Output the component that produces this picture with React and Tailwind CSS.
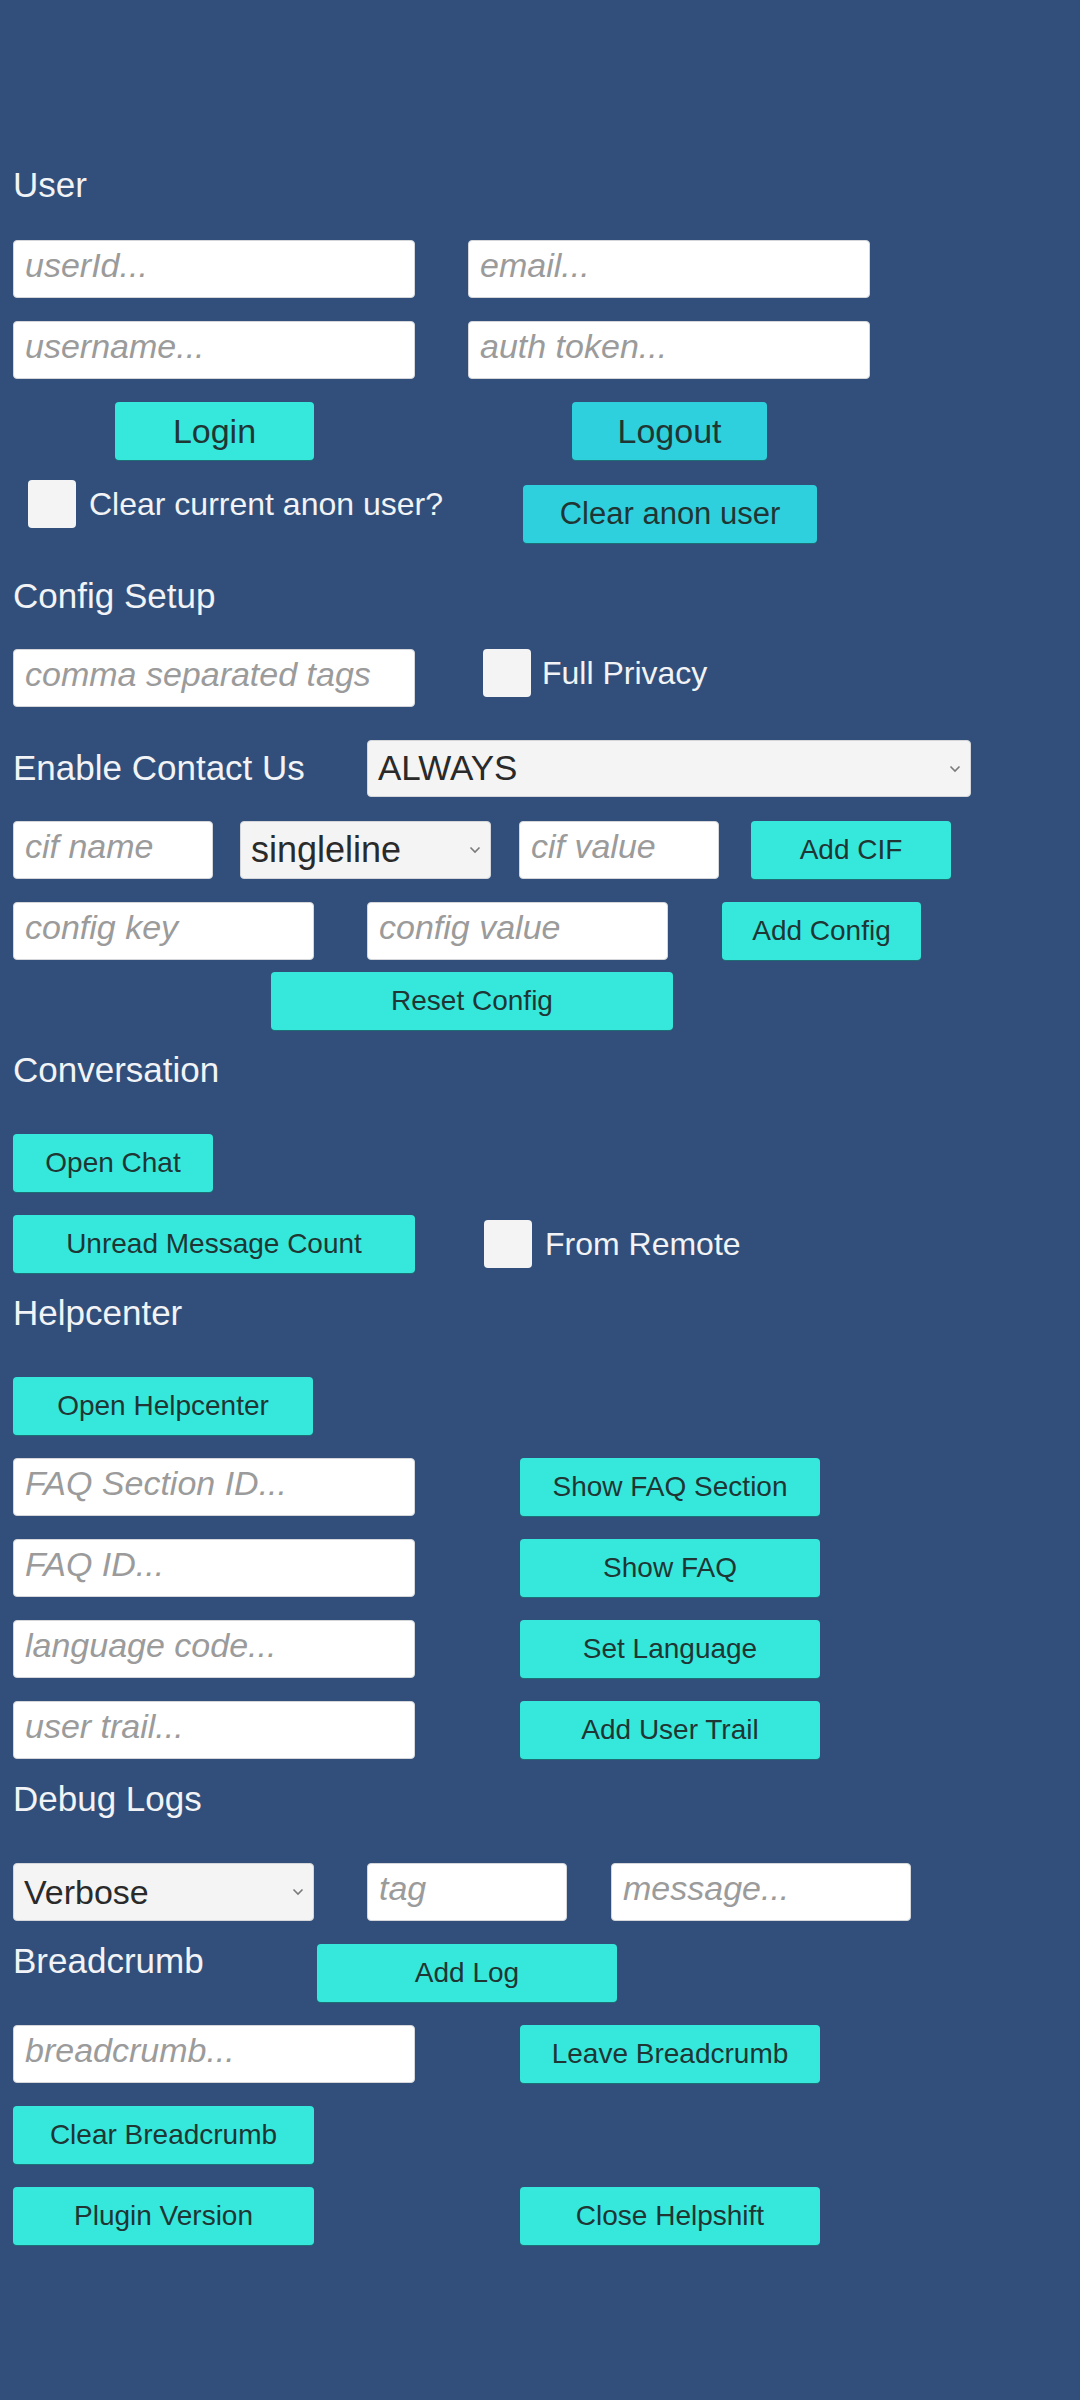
// Helpshift plugin test screen (Unity-style debug panel)

function Heading({ children, className = '' }) {
  return (
    <div className={`h-[40px] leading-[34px] text-[35px] text-[#f1f3f6] whitespace-nowrap ${className}`}>
      {children}
    </div>
  );
}

function Field({ ph, className = '' }) {
  return (
    <input
      placeholder={ph}
      className={`h-[58px] shrink-0 rounded-[4px] bg-white border border-[#d4d6da] pl-[11px] pb-[8px] text-[34px] text-[#323232] placeholder:italic placeholder:text-[#9b9b9b] outline-none ${className}`}
    />
  );
}

function Btn({ label, className = '' }) {
  return (
    <button
      className={`h-[58px] shrink-0 rounded-[4px] flex items-center justify-center text-[#203634] shadow-[0_1px_0_#1d6f76] whitespace-nowrap ${className}`}
    >
      {label}
    </button>
  );
}

function Chevron() {
  return (
    <svg width="12" height="8" viewBox="0 0 12 8" className="shrink-0">
      <path d="M1.5 1.5 L6 6 L10.5 1.5" fill="none" stroke="#7a7a7a" strokeWidth="1.6" />
    </svg>
  );
}

function Select({ value, className = '' }) {
  return (
    <div
      className={`shrink-0 rounded-[4px] bg-[#f4f4f4] border border-[#d4d6da] pl-[10px] pr-[9px] flex items-center justify-between text-[#2a2a2a] ${className}`}
    >
      <span>{value}</span>
      <Chevron />
    </div>
  );
}

function Check() {
  return <div className="w-[48px] h-[48px] shrink-0 rounded-[4px] bg-[#f4f4f4]" />;
}

export default function App() {
  return (
    <div className="min-h-[2400px] w-[1080px] bg-[#314f7a] pl-[13px] pt-[168px] flex flex-col items-start font-['Liberation_Sans',Arial,sans-serif]">
      {/* User */}
      <Heading>User</Heading>
      <div className="mt-[32px] flex">
        <Field ph="userId..." className="w-[402px]" />
        <Field ph="email..." className="ml-[53px] w-[402px]" />
      </div>
      <div className="mt-[23px] flex">
        <Field ph="username..." className="w-[402px]" />
        <Field ph="auth token..." className="ml-[53px] w-[402px]" />
      </div>
      <div className="mt-[23px] flex">
        <Btn label="Login" className="ml-[102px] w-[199px] bg-[#36e8dc] text-[34px]" />
        <Btn label="Logout" className="ml-[258px] w-[195px] bg-[#2fd0de] text-[34px]" />
      </div>
      <div className="mt-[19px] flex items-start">
        <div className="w-[510px] h-[49px] flex items-center">
          <div className="ml-[15px]">
            <Check />
          </div>
          <span className="ml-[13px] text-[32px] text-[#f1f3f6] whitespace-nowrap">Clear current anon user?</span>
        </div>
        <Btn label="Clear anon user" className="mt-[6px] h-[55px] w-[294px] bg-[#2fd0de] text-[31px]" />
      </div>

      {/* Config Setup */}
      <Heading className="mt-[36px]">Config Setup</Heading>
      <div className="mt-[30px] flex items-start">
        <Field ph="comma separated tags" className="w-[402px]" />
        <div className="ml-[68px] h-[48px] flex items-center">
          <Check />
          <span className="ml-[11px] text-[32px] text-[#f1f3f6] whitespace-nowrap">Full Privacy</span>
        </div>
      </div>
      <div className="mt-[33px] flex">
        <div className="w-[354px] h-[57px] flex items-center text-[35px] text-[#f1f3f6] whitespace-nowrap">
          Enable Contact Us
        </div>
        <Select value="ALWAYS" className="w-[604px] h-[57px] text-[35px]" />
      </div>
      <div className="mt-[24px] flex">
        <Field ph="cif name" className="w-[200px]" />
        <Select value="singleline" className="ml-[27px] w-[251px] h-[58px] text-[36px]" />
        <Field ph="cif value" className="ml-[28px] w-[200px]" />
        <Btn label="Add CIF" className="ml-[32px] w-[200px] bg-[#36e8dc] text-[28px]" />
      </div>
      <div className="mt-[23px] flex">
        <Field ph="config key" className="w-[301px]" />
        <Field ph="config value" className="ml-[53px] w-[301px]" />
        <Btn label="Add Config" className="ml-[54px] w-[199px] bg-[#36e8dc] text-[28px]" />
      </div>
      <div className="mt-[12px] flex">
        <Btn label="Reset Config" className="ml-[258px] w-[402px] bg-[#36e8dc] text-[28px]" />
      </div>

      {/* Conversation */}
      <Heading className="mt-[23px]">Conversation</Heading>
      <Btn label="Open Chat" className="mt-[41px] w-[200px] bg-[#36e8dc] text-[28px]" />
      <div className="mt-[23px] flex">
        <Btn label="Unread Message Count" className="w-[402px] bg-[#36e8dc] text-[28px]" />
        <div className="ml-[69px] h-[58px] flex items-center">
          <Check />
          <span className="ml-[13px] text-[32px] text-[#f1f3f6] whitespace-nowrap">From Remote</span>
        </div>
      </div>

      {/* Helpcenter */}
      <Heading className="mt-[23px]">Helpcenter</Heading>
      <Btn label="Open Helpcenter" className="mt-[41px] w-[300px] bg-[#36e8dc] text-[28px]" />
      {[
        ['FAQ Section ID...', 'Show FAQ Section'],
        ['FAQ ID...', 'Show FAQ'],
        ['language code...', 'Set Language'],
        ['user trail...', 'Add User Trail'],
      ].map(([ph, label]) => (
        <div key={label} className="mt-[23px] flex">
          <Field ph={ph} className="w-[402px]" />
          <Btn label={label} className="ml-[105px] w-[300px] bg-[#36e8dc] text-[28px]" />
        </div>
      ))}

      {/* Debug Logs */}
      <Heading className="mt-[23px]">Debug Logs</Heading>
      <div className="mt-[41px] flex">
        <Select value="Verbose" className="w-[301px] h-[58px] text-[34px]" />
        <Field ph="tag" className="ml-[53px] w-[200px]" />
        <Field ph="message..." className="ml-[44px] w-[300px]" />
      </div>
      <div className="mt-[23px] flex items-start">
        <Heading className="w-[304px]">Breadcrumb</Heading>
        <Btn label="Add Log" className="w-[300px] bg-[#36e8dc] text-[28px]" />
      </div>
      <div className="mt-[23px] flex">
        <Field ph="breadcrumb..." className="w-[402px]" />
        <Btn label="Leave Breadcrumb" className="ml-[105px] w-[300px] bg-[#36e8dc] text-[28px]" />
      </div>
      <Btn label="Clear Breadcrumb" className="mt-[23px] w-[301px] bg-[#36e8dc] text-[28px]" />
      <div className="mt-[23px] flex">
        <Btn label="Plugin Version" className="w-[301px] bg-[#36e8dc] text-[28px]" />
        <Btn label="Close Helpshift" className="ml-[206px] w-[300px] bg-[#36e8dc] text-[28px]" />
      </div>
    </div>
  );
}
